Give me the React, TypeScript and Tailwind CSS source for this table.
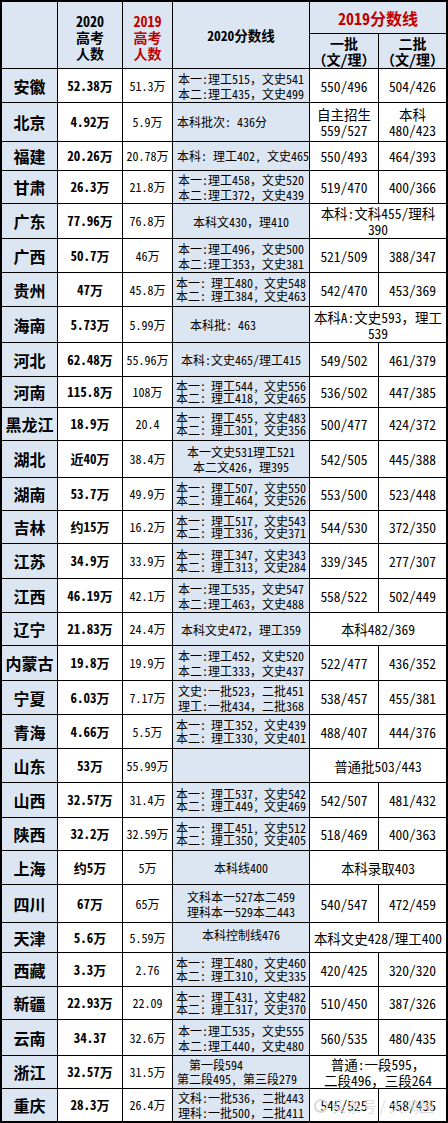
import React from "react";

const MONO = "font-['Noto_Sans_Mono_CJK_SC','Liberation_Mono','Noto_Sans_CJK_SC',monospace]";
const HEI = "font-['Noto_Sans_CJK_SC',sans-serif]";

const A = (l1: string, l2: string) => (
  <div className="text-[12px] leading-[15px] whitespace-nowrap">
    {l1}
    <br />
    {l2}
  </div>
);

const B = (r1: string[], r2: string[]) => (
  <div className="px-[3px] text-[12px] leading-[12.5px] whitespace-nowrap">
    {[r1, r2].map((r, i) => (
      <div key={i} className="flex justify-between">
        {r.map((s, j) => (
          <span key={j}>{s}</span>
        ))}
      </div>
    ))}
  </div>
);

const bb = (a1: string, a2: string, b1: string, b2: string) =>
  B(["本一:", `理工${a1},`, `文史${a2}`], ["本二:", `理工${b1},`, `文史${b2}`]);

const aa = (a1: string, a2: string, b1: string, b2: string) =>
  A(`本一:理工${a1}，文史${a2}`, `本二:理工${b1}，文史${b2}`);

const C = (s: string) => <div className="text-[12px] leading-[15px] whitespace-nowrap">{s}</div>;

type Row = {
  p: string;
  n20: string;
  n19: string;
  c4: React.ReactNode;
  t: [string, string] | { m: React.ReactNode };
  h: string;
};

const rows: Row[] = [
  { p: "安徽", n20: "52.38万", n19: "51.3万", c4: aa("515", "541", "435", "499"), t: ["550/496", "504/426"], h: "h-[34px]" },
  {
    p: "北京",
    n20: "4.92万",
    n19: "5.9万",
    c4: <div className="pl-[4px] text-left text-[12px] whitespace-nowrap">本科批次: 436分</div>,
    t: ["自主招生\n559/527", "本科\n480/423"],
    h: "h-[39px]",
  },
  {
    p: "福建",
    n20: "20.26万",
    n19: "20.78万",
    c4: <div className="pl-[4px] text-left text-[12px] whitespace-nowrap">本科: 理工402, 文史465</div>,
    t: ["550/493", "464/393"],
    h: "h-[29px]",
  },
  { p: "甘肃", n20: "26.3万", n19: "21.8万", c4: aa("458", "520", "372", "439"), t: ["519/470", "400/366"], h: "h-[33px]" },
  {
    p: "广东",
    n20: "77.96万",
    n19: "76.8万",
    c4: C("本科文430，理410"),
    t: { m: <>本科:文科455/理科<br />390</> },
    h: "h-[35px]",
  },
  { p: "广西", n20: "50.7万", n19: "46万", c4: aa("496", "500", "353", "381"), t: ["521/509", "388/347"], h: "h-[34px]" },
  { p: "贵州", n20: "47万", n19: "45.8万", c4: bb("480", "548", "384", "463"), t: ["542/470", "453/369"], h: "h-[34px]" },
  {
    p: "海南",
    n20: "5.73万",
    n19: "5.99万",
    c4: <div className="pl-[17px] text-left text-[12px] whitespace-nowrap">本科批: 463</div>,
    t: { m: <>本科A:文史593，理工<br />539</> },
    h: "h-[36px]",
  },
  { p: "河北", n20: "62.48万", n19: "55.96万", c4: C("本科:文史465/理工415"), t: ["549/502", "461/379"], h: "h-[34px]" },
  { p: "河南", n20: "115.8万", n19: "108万", c4: bb("544", "556", "418", "465"), t: ["536/502", "447/385"], h: "h-[31px]" },
  { p: "黑龙江", n20: "18.9万", n19: "20.4", c4: bb("455", "483", "301", "356"), t: ["500/477", "424/372"], h: "h-[33px]" },
  { p: "湖北", n20: "近40万", n19: "38.4万", c4: A("本一文史531理工521", "本二文426，理395"), t: ["542/505", "445/388"], h: "h-[37px]" },
  { p: "湖南", n20: "53.7万", n19: "49.9万", c4: bb("507", "550", "464", "526"), t: ["553/500", "523/448"], h: "h-[33px]" },
  { p: "吉林", n20: "约15万", n19: "16.2万", c4: bb("517", "543", "336", "371"), t: ["544/530", "372/350"], h: "h-[33px]" },
  { p: "江苏", n20: "34.9万", n19: "33.9万", c4: bb("347", "343", "313", "284"), t: ["339/345", "277/307"], h: "h-[35px]" },
  { p: "江西", n20: "46.19万", n19: "42.1万", c4: aa("535", "547", "463", "488"), t: ["558/522", "502/449"], h: "h-[34px]" },
  { p: "辽宁", n20: "21.83万", n19: "24.4万", c4: C("本科文史472，理工359"), t: { m: <>本科482/369</> }, h: "h-[33px]" },
  { p: "内蒙古", n20: "19.8万", n19: "19.9万", c4: aa("452", "520", "333", "437"), t: ["522/477", "436/352"], h: "h-[35px]" },
  {
    p: "宁夏",
    n20: "6.03万",
    n19: "7.17万",
    c4: A("文史:一批523，二批451", "理工:一批434，二批368"),
    t: ["538/457", "455/381"],
    h: "h-[34px]",
  },
  { p: "青海", n20: "4.66万", n19: "5.5万", c4: bb("352", "439", "330", "401"), t: ["488/407", "444/376"], h: "h-[34px]" },
  { p: "山东", n20: "53万", n19: "55.99万", c4: null, t: { m: <>普通批503/443</> }, h: "h-[34px]" },
  { p: "山西", n20: "32.57万", n19: "31.4万", c4: bb("537", "542", "449", "469"), t: ["542/507", "481/432"], h: "h-[35px]" },
  { p: "陕西", n20: "32.2万", n19: "32.59万", c4: bb("451", "512", "350", "405"), t: ["518/469", "400/363"], h: "h-[33px]" },
  { p: "上海", n20: "约5万", n19: "5万", c4: C("本科线400"), t: { m: <>本科录取403</> }, h: "h-[34px]" },
  {
    p: "四川",
    n20: "67万",
    n19: "65万",
    c4: A("文科本一527本二459", "理科本一529本二443"),
    t: ["540/547", "472/459"],
    h: "h-[38px]",
  },
  {
    p: "天津",
    n20: "5.6万",
    n19: "5.59万",
    c4: <div className="-mt-[6px] text-[12px] whitespace-nowrap">本科控制线476</div>,
    t: { m: <>本科文史428/理工400</> },
    h: "h-[30px]",
  },
  { p: "西藏", n20: "3.3万", n19: "2.76", c4: bb("480", "460", "310", "335"), t: ["420/425", "320/320"], h: "h-[34px]" },
  { p: "新疆", n20: "22.93万", n19: "22.09", c4: bb("431", "482", "317", "370"), t: ["510/450", "387/326"], h: "h-[33px]" },
  { p: "云南", n20: "34.37", n19: "32.6万", c4: aa("535", "555", "440", "480"), t: ["560/535", "480/435"], h: "h-[36px]" },
  {
    p: "浙江",
    n20: "32.57万",
    n19: "31.5万",
    c4: (
      <div className="text-[12px] leading-[14px] whitespace-nowrap text-left">
        <div className="pl-[16px]">第一段594</div>
        <div className="pl-[4px]">第二段495, 第三段279</div>
      </div>
    ),
    t: { m: <>普通:一段595，<br />二段496，三段264</> },
    h: "h-[33px]",
  },
  {
    p: "重庆",
    n20: "28.3万",
    n19: "26.4万",
    c4: A("文科:一批536，二批443", "理科:一批500，二批411"),
    t: ["545/525", "458/435"],
    h: "h-[34px]",
  },
];

const cell = "border-r border-b border-black align-middle text-center p-0";
const blue = "bg-[#dce6f2]";

export default function App() {
  return (
    <div className={`relative w-[448px] bg-white text-black ${MONO}`}>
      <div className="border-l-2 border-t-2 border-black">
        <table className="w-[446px] table-fixed border-separate border-spacing-0">
          <colgroup>
            <col className="w-[56px]" />
            <col className="w-[65px]" />
            <col className="w-[50px]" />
            <col className="w-[137px]" />
            <col className="w-[69px]" />
            <col className="w-[69px]" />
          </colgroup>
          <thead>
            <tr className="h-[32px]">
              <th rowSpan={2} className={`${cell} ${blue}`}></th>
              <th rowSpan={2} className={`${cell} ${blue} text-[14px] leading-[16px] font-bold pt-[3px]`}>
                2020
                <br />
                高考
                <br />
                人数
              </th>
              <th rowSpan={2} className={`${cell} ${blue} text-[14px] leading-[16px] font-bold text-[#c00000] pt-[3px]`}>
                2019
                <br />
                高考
                <br />
                人数
              </th>
              <th rowSpan={2} className={`${cell} ${blue} text-[13.5px] font-bold`}>
                2020分数线
              </th>
              <th colSpan={2} className={`${cell} border-r-2 ${blue} text-[16px] font-bold text-[#c00000]`}>
                2019分数线
              </th>
            </tr>
            <tr className="h-[35px]">
              <th className={`${cell} ${blue} text-[14px] leading-[16px] font-bold`}>
                一批
                <br />
                （文/理）
              </th>
              <th className={`${cell} border-r-2 ${blue} text-[14px] leading-[16px] font-bold`}>
                二批
                <br />
                （文/理）
              </th>
            </tr>
          </thead>
          <tbody>
            {rows.map((r, i) => {
              const last = i === rows.length - 1;
              const bot = last ? "border-b-2" : "";
              return (
                <tr key={r.p} className={r.h}>
                  <td className={`${cell} ${bot} ${blue} ${HEI} text-[16px] font-bold whitespace-nowrap`}>{r.p}</td>
                  <td className={`${cell} ${bot} text-[13px] font-bold whitespace-nowrap`}>{r.n20}</td>
                  <td className={`${cell} ${bot} text-[12px] whitespace-nowrap`}>{r.n19}</td>
                  <td className={`${cell} ${bot} ${blue} overflow-hidden`}>{r.c4}</td>
                  {Array.isArray(r.t) ? (
                    <>
                      <td className={`${cell} ${bot} text-[13.5px] leading-[16px] whitespace-pre-line`}>{r.t[0]}</td>
                      <td className={`${cell} ${bot} border-r-2 text-[13.5px] leading-[16px] whitespace-pre-line`}>
                        {r.t[1]}
                      </td>
                    </>
                  ) : (
                    <td colSpan={2} className={`${cell} ${bot} border-r-2 text-[13.5px] leading-[16px] whitespace-nowrap`}>
                      {r.t.m}
                    </td>
                  )}
                </tr>
              );
            })}
          </tbody>
        </table>
      </div>
      <div
        className={`absolute right-[14px] bottom-[6px] flex items-center gap-[3px] text-[15px] text-[#d8d8d8]/90 ${HEI} pointer-events-none`}
      >
        <span className="inline-block w-[14px] h-[14px] rounded-full border-2 border-[#d8d8d8]" />
        <span>头条号 / 大鸿园</span>
      </div>
    </div>
  );
}
